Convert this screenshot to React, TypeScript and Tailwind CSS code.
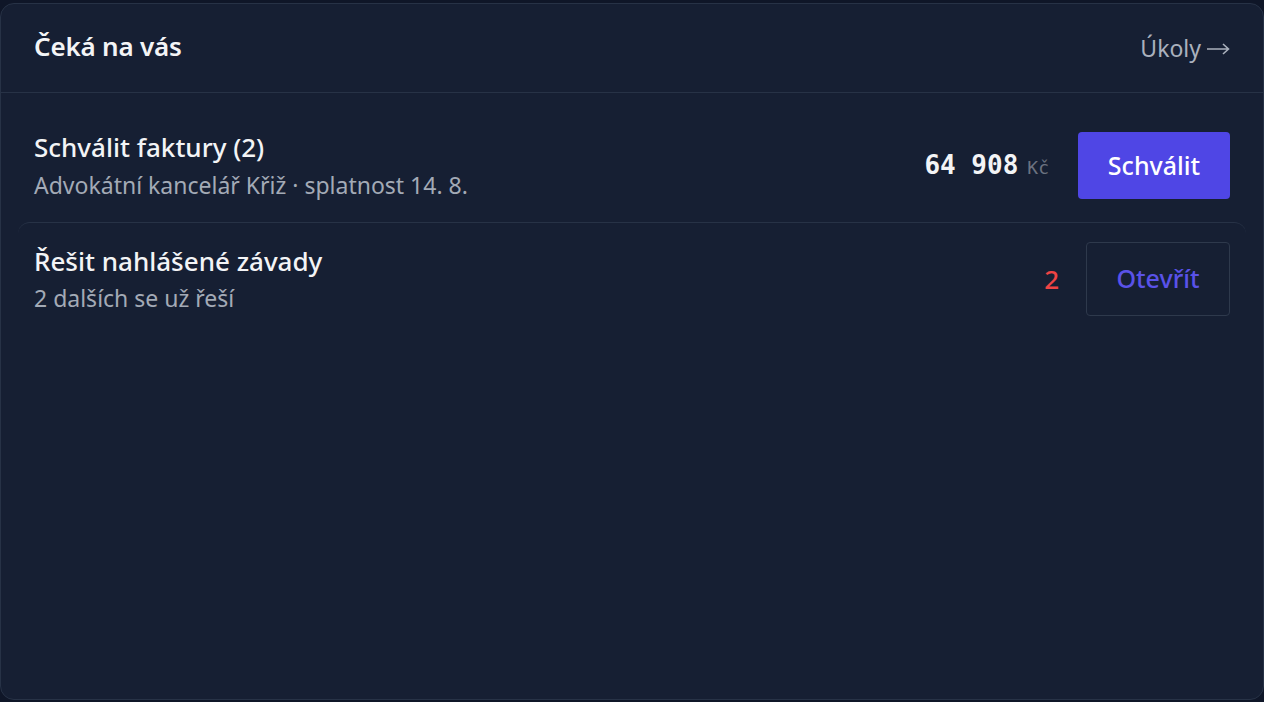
import React from "react";

export default function App() {
  return (
    <div
      className="w-[1264px] h-[702px] bg-[#0f1628] pt-[3px] pb-[2px]"
      style={{ fontFamily: '"Noto Sans", "Open Sans", sans-serif' }}
    >
      <div className="h-[697px] rounded-[14px] border border-[#273246] bg-[#161f33] flex flex-col">
        <div className="h-[89px] shrink-0 flex items-center justify-between pl-[33px] pr-[33px] pb-[4px] border-b border-[#273246]">
          <h2 className="text-[26px] leading-[32px] font-semibold text-[#f3f4f6] tracking-[-0.2px]">Čeká na vás</h2>
          <span className="flex items-center gap-[6px] text-[23px] leading-[30px] text-[#aab1bd] pt-[3px]">
            Úkoly
            <svg width="23" height="12" viewBox="0 0 23 12" fill="none" className="mt-[3px]">
              <path d="M0 6 H21.5 M16 1 L21.5 6 L16 11" stroke="#aab1bd" strokeWidth="1.6" />
            </svg>
          </span>
        </div>
        <div className="mx-[17px] px-4 pt-[38px] pb-[22px] flex items-center justify-between">
          <div className="flex flex-col gap-[7px]">
            <div className="text-[26px] font-medium text-[#f3f4f6] leading-[32px]">Schválit faktury (2)</div>
            <div className="text-[23px] text-[#a3aab6] leading-[30px]">Advokátní kancelář Křiž · splatnost 14. 8.</div>
          </div>
          <div className="flex items-center gap-[29px]">
            <div className="flex items-baseline gap-[9px]">
              <span className="text-[26px] font-semibold text-[#f3f4f6]" style={{ fontFamily: '"DejaVu Sans Mono", monospace' }}>64 908</span>
              <span className="text-[18px] font-medium text-[#6b7280]" style={{ fontFamily: '"DejaVu Sans Mono", monospace' }}>Kč</span>
            </div>
            <button className="w-[152px] h-[67px] rounded-[4px] bg-[#4f46e5] text-white text-[25px] font-medium">Schválit</button>
          </div>
        </div>
        <div className="mx-[17px] px-4 pt-[19px] rounded-t-[12px] border-t border-[#273246] flex items-center justify-between">
          <div className="flex flex-col gap-[6px] pb-[1px]">
            <div className="text-[26px] font-medium text-[#f3f4f6] leading-[32px]">Řešit nahlášené závady</div>
            <div className="text-[23px] text-[#a3aab6] leading-[30px]">2 dalších se už řeší</div>
          </div>
          <div className="flex items-center gap-[27px]">
            <span className="text-[26px] font-medium text-[#ef4444]">2</span>
            <button className="w-[144px] h-[74px] rounded-[4px] border-[1.5px] border-[#2e394c] text-[#5a52e8] text-[25px] font-medium">Otevřít</button>
          </div>
        </div>
      </div>
    </div>
  );
}
